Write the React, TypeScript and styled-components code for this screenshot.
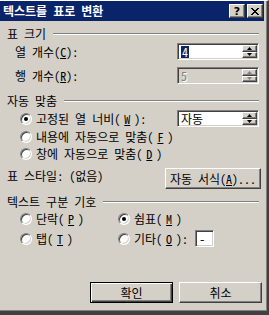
import React from 'react';
import styled, { createGlobalStyle, css } from 'styled-components';

const GUI_FONT = `"Noto Sans Mono CJK KR", "Noto Sans CJK KR", "DejaVu Sans", sans-serif`;

const GlobalStyle = createGlobalStyle`
  html, body {
    margin: 0;
    padding: 0;
    background: #d4d0c8;
  }
  body {
    font-family: ${GUI_FONT};
    font-size: 12px;
    color: #000;
  }
`;

// classic 3d frame pieces
const sunken = css`
  border: 1px solid;
  border-color: #808080 #ffffff #ffffff #808080;
  box-shadow: inset 1px 1px #404040, inset -1px -1px #d4d0c8;
`;

const raised = css`
  border: 1px solid;
  border-color: #ffffff #404040 #404040 #ffffff;
  box-shadow: inset -1px -1px #808080, inset 1px 1px #d4d0c8;
`;

const Window = styled.div`
  width: 269px;
  height: 315px;
  box-sizing: border-box;
  background: #d4d0c8;
  border-top: 1px solid #ffffff;
  border-right: 2px solid #404040;
  border-bottom: 4px solid #404040;
  display: flex;
`;

const Frame = styled.div`
  flex: 1;
  min-width: 0;
  display: flex;
  flex-direction: column;
  border-right: 1px solid #808080;
  border-bottom: 1px solid #808080;
  padding-right: 2px;
`;

const TitleBar = styled.div`
  height: 20px;
  flex: none;
  background: #0a246a;
  display: flex;
  align-items: center;
  padding: 0 1px 0 3px;
  gap: 2px;
`;

const TitleText = styled.span`
  flex: 1;
  color: #ffffff;
  font-weight: 700;
  font-size: 12px;
  line-height: 14px;
  white-space: nowrap;
`;

const CaptionButton = styled.span`
  width: 16px;
  height: 14px;
  box-sizing: border-box;
  background: #d4d0c8;
  ${raised};
  display: flex;
  align-items: center;
  justify-content: center;
  font-family: "DejaVu Sans", sans-serif;
  font-weight: 700;
  font-size: 11px;
  line-height: 1;
`;

const Body = styled.div`
  flex: 1;
  display: flex;
  flex-direction: column;
  padding: 7px 5px 7px 7px;
`;

const GroupHeader = styled.div<{ $top: number }>`
  display: flex;
  align-items: center;
  height: 12px;
  margin-top: ${p => p.$top}px;
  line-height: 12px;
  white-space: nowrap;
`;

const EtchedLine = styled.div`
  flex: 1;
  height: 0;
  margin-left: 7px;
  margin-top: -1px;
  border-top: 1px solid #808080;
  border-bottom: 1px solid #ffffff;
`;

const FieldRow = styled.div<{ $top: number }>`
  display: flex;
  align-items: center;
  justify-content: space-between;
  height: 17px;
  margin-top: ${p => p.$top}px;
`;

const FieldLabel = styled.span<{ $indent: number }>`
  margin-left: ${p => p.$indent}px;
  white-space: nowrap;
  line-height: 12px;
`;

const SpinBox = styled.div<{ $disabled?: boolean }>`
  width: 82px;
  height: 17px;
  box-sizing: border-box;
  ${sunken};
  background: ${p => (p.$disabled ? '#d4d0c8' : '#ffffff')};
  display: flex;
  padding: 1px;
`;

const SpinValue = styled.span<{ $disabled?: boolean }>`
  flex: 1;
  display: flex;
  align-items: center;
  padding-left: 2px;
  line-height: 12px;
  color: ${p => (p.$disabled ? '#808080' : '#000')};
  text-shadow: ${p => (p.$disabled ? '1px 1px #ffffff' : 'none')};
`;

const Selected = styled.span`
  background: #0a246a;
  color: #ffffff;
  padding: 0 1px;
`;

const Spinner = styled.div`
  width: 15px;
  display: flex;
  flex-direction: column;
`;

const SpinHalf = styled.span`
  flex: 1;
  box-sizing: border-box;
  background: #d4d0c8;
  ${raised};
  display: flex;
  align-items: center;
  justify-content: center;
`;

const OptionRow = styled.div<{ $top: number }>`
  display: flex;
  align-items: center;
  justify-content: space-between;
  height: 17px;
  margin-top: ${p => p.$top}px;
`;

const RadioLabel = styled.label<{ $indent?: number }>`
  display: flex;
  align-items: center;
  gap: 4px;
  margin-left: ${p => p.$indent ?? 0}px;
  white-space: nowrap;
  line-height: 12px;
`;

const RadioDot = styled.span<{ $checked?: boolean }>`
  position: relative;
  flex: none;
  width: 12px;
  height: 12px;
  box-sizing: border-box;
  border-radius: 50%;
  ${sunken};
  background: #ffffff;
  &::after {
    content: '';
    display: ${p => (p.$checked ? 'block' : 'none')};
    position: absolute;
    left: 3px;
    top: 3px;
    width: 4px;
    height: 4px;
    border-radius: 50%;
    background: #000;
  }
`;

const StyleRow = styled.div`
  display: flex;
  align-items: flex-start;
  justify-content: space-between;
  height: 21px;
  margin-top: 6px;
`;

const StyleLabel = styled.span`
  display: flex;
  margin-top: 2px;
  line-height: 12px;
  white-space: nowrap;
`;

const StyleValue = styled.span`
  margin-left: 6px;
`;

const PushButton = styled.button<{ $width: number; $default?: boolean }>`
  width: ${p => p.$width}px;
  height: 21px;
  box-sizing: border-box;
  padding: 0;
  font-family: ${GUI_FONT};
  font-size: 12px;
  color: #000;
  background: #d4d0c8;
  ${raised};
  ${p =>
    p.$default &&
    css`
      border-color: #000;
      box-shadow: inset 1px 1px #ffffff, inset -1px -1px #404040, inset -2px -2px #808080;
    `}
`;

const SeparatorGrid = styled.div`
  display: grid;
  grid-template-columns: 98px auto;
  grid-auto-rows: 17px;
  row-gap: 3px;
  margin-top: 2px;
  margin-left: 13px;
`;

const OtherCell = styled.div`
  display: flex;
  align-items: center;
`;

const CharBox = styled.span`
  width: 19px;
  height: 17px;
  box-sizing: border-box;
  margin-left: 7px;
  ${sunken};
  background: #ffffff;
  display: flex;
  align-items: center;
  padding-left: 3px;
  line-height: 12px;
`;

const ButtonRow = styled.div`
  display: flex;
  justify-content: flex-end;
  gap: 6px;
  margin-top: auto;
  margin-right: -3px;
`;

const Arrow = ({ up, disabled }: { up?: boolean; disabled?: boolean }) => (
  <svg width="5" height="3" viewBox="0 0 5 3" style={{ display: 'block' }}>
    <polygon
      points={up ? '2.5,0 5,3 0,3' : '0,0 5,0 2.5,3'}
      fill={disabled ? '#808080' : '#000'}
    />
  </svg>
);

const Spin = ({ disabled }: { disabled?: boolean }) => (
  <Spinner>
    <SpinHalf>
      <Arrow up disabled={disabled} />
    </SpinHalf>
    <SpinHalf>
      <Arrow disabled={disabled} />
    </SpinHalf>
  </Spinner>
);

const CloseGlyph = () => (
  <svg width="8" height="7" viewBox="0 0 8 7" shapeRendering="crispEdges">
    <path d="M0 0h2v1h-2zM1 1h2v1h-2zM2 2h4v1h-4zM3 3h2v1h-2zM2 4h4v1h-4zM1 5h2v1h-2zM0 6h2v1h-2zM6 0h2v1h-2zM5 1h2v1h-2zM5 5h2v1h-2zM6 6h2v1h-2z" fill="#000" />
  </svg>
);

export default function App() {
  return (
    <>
      <GlobalStyle />
      <Window>
        <Frame>
          <TitleBar>
            <TitleText>텍스트를 표로 변환</TitleText>
            <CaptionButton>?</CaptionButton>
            <CaptionButton>
              <CloseGlyph />
            </CaptionButton>
          </TitleBar>

          <Body>
            <GroupHeader $top={0}>
              표 크기
              <EtchedLine />
            </GroupHeader>
            <FieldRow $top={3}>
              <FieldLabel $indent={8}>
                열 개수(<u>C</u>):
              </FieldLabel>
              <SpinBox>
                <SpinValue>
                  <Selected>4</Selected>
                </SpinValue>
                <Spin />
              </SpinBox>
            </FieldRow>
            <FieldRow $top={7}>
              <FieldLabel $indent={8}>
                행 개수(<u>R</u>):
              </FieldLabel>
              <SpinBox $disabled>
                <SpinValue $disabled>5</SpinValue>
                <Spin disabled />
              </SpinBox>
            </FieldRow>

            <GroupHeader $top={11}>
              자동 맞춤
              <EtchedLine />
            </GroupHeader>
            <OptionRow $top={3}>
              <RadioLabel $indent={13}>
                <RadioDot $checked />
                고정된 열 너비(<u>W</u>):
              </RadioLabel>
              <SpinBox>
                <SpinValue>자동</SpinValue>
                <Spin />
              </SpinBox>
            </OptionRow>
            <OptionRow $top={1}>
              <RadioLabel $indent={13}>
                <RadioDot />
                내용에 자동으로 맞춤(<u>F</u>)
              </RadioLabel>
            </OptionRow>
            <OptionRow $top={0}>
              <RadioLabel $indent={13}>
                <RadioDot />
                창에 자동으로 맞춤(<u>D</u>)
              </RadioLabel>
            </OptionRow>

            <StyleRow>
              <StyleLabel>
                표 스타일:
                <StyleValue>(없음)</StyleValue>
              </StyleLabel>
              <PushButton $width={96} style={{ marginRight: -2 }}>
                자동 서식(<u>A</u>)...
              </PushButton>
            </StyleRow>

            <GroupHeader $top={7}>
              텍스트 구분 기호
              <EtchedLine />
            </GroupHeader>
            <SeparatorGrid>
              <RadioLabel>
                <RadioDot />
                단락(<u>P</u>)
              </RadioLabel>
              <RadioLabel>
                <RadioDot $checked />
                쉼표(<u>M</u>)
              </RadioLabel>
              <RadioLabel>
                <RadioDot />
                탭(<u>T</u>)
              </RadioLabel>
              <OtherCell>
                <RadioLabel>
                  <RadioDot />
                  기타(<u>O</u>):
                </RadioLabel>
                <CharBox>-</CharBox>
              </OtherCell>
            </SeparatorGrid>

            <ButtonRow>
              <PushButton $width={83} $default>
                확인
              </PushButton>
              <PushButton $width={83}>취소</PushButton>
            </ButtonRow>
          </Body>
        </Frame>
      </Window>
    </>
  );
}
